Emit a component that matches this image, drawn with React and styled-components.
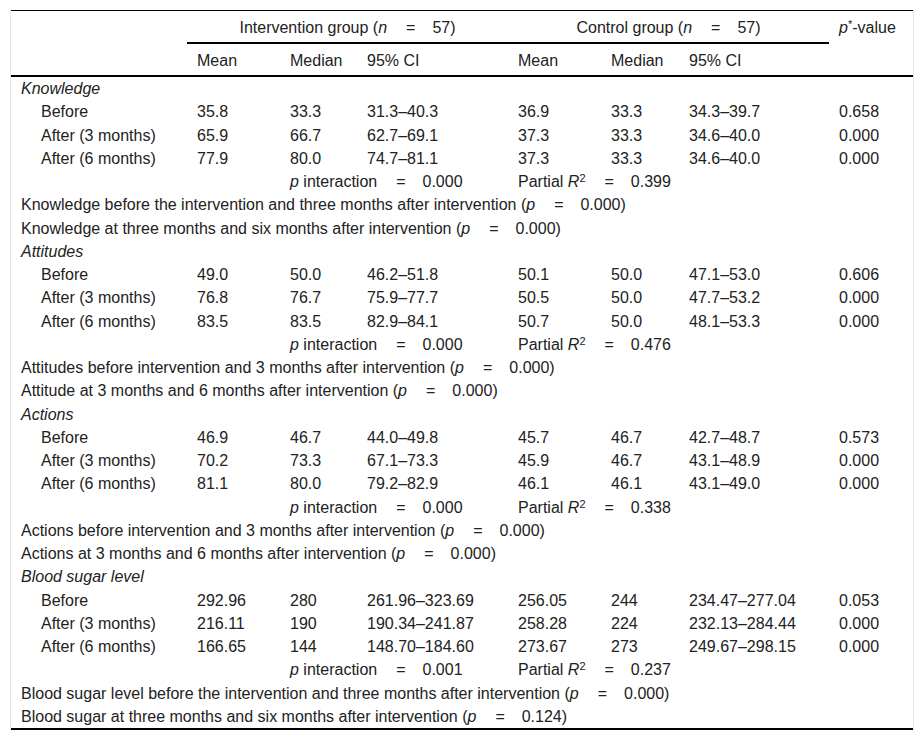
import React from 'react'
import styled, {createGlobalStyle} from 'styled-components'

const GlobalStyle = createGlobalStyle`
    body {
        margin: 0;
        background: #fff;
        font-family: "Liberation Sans", Arial, sans-serif;
        color: #222;
    }
`

const Frame = styled.div`
    margin: 10px 10px 0 10px;
    border-left: 1px solid #e4e4e4;
    border-right: 1px solid #e4e4e4;
    width: 902px;
`

const Table = styled.table`
    width: 100%;
    border-collapse: collapse;
    border-top: 1px solid #000;
    border-bottom: 2px solid #000;
    font-size: 16px;
    table-layout: fixed;
`

const HeadCell = styled.th`
    font-weight: normal;
    text-align: ${p => (p.$center ? 'center' : 'left')};
    vertical-align: top;
    padding: 8px 10px 6px 10px;
    line-height: 17px;
    border-bottom: ${p => (p.$rule ? '2px solid #000' : 'none')};
    white-space: nowrap;
`

const HeadRow = styled.tr`
    border-bottom: ${p => (p.$last ? '2px solid #000' : 'none')};
`

const Cell = styled.td`
    padding: 3px 10px 3px ${p => (p.$indent ? '30px' : '10px')};
    line-height: 17.25px;
    font-style: ${p => (p.$italic ? 'italic' : 'normal')};
    white-space: nowrap;
    vertical-align: top;
`

const Eq = styled.span`
    display: inline-block;
    margin: 0 17px 0 19px;
`

const Sup = styled.sup`
    font-size: 11px;
    line-height: 0;
    vertical-align: baseline;
    position: relative;
    top: -5px;
`

const sections = [
    {
        title: 'Knowledge',
        rows: [
            ['Before', '35.8', '33.3', '31.3–40.3', '36.9', '33.3', '34.3–39.7', '0.658'],
            ['After (3 months)', '65.9', '66.7', '62.7–69.1', '37.3', '33.3', '34.6–40.0', '0.000'],
            ['After (6 months)', '77.9', '80.0', '74.7–81.1', '37.3', '33.3', '34.6–40.0', '0.000'],
        ],
        pInt: '0.000',
        r2: '0.399',
        notes: [
            ['Knowledge before the intervention and three months after intervention', '0.000'],
            ['Knowledge at three months and six months after intervention', '0.000'],
        ],
    },
    {
        title: 'Attitudes',
        rows: [
            ['Before', '49.0', '50.0', '46.2–51.8', '50.1', '50.0', '47.1–53.0', '0.606'],
            ['After (3 months)', '76.8', '76.7', '75.9–77.7', '50.5', '50.0', '47.7–53.2', '0.000'],
            ['After (6 months)', '83.5', '83.5', '82.9–84.1', '50.7', '50.0', '48.1–53.3', '0.000'],
        ],
        pInt: '0.000',
        r2: '0.476',
        notes: [
            ['Attitudes before intervention and 3 months after intervention', '0.000'],
            ['Attitude at 3 months and 6 months after intervention', '0.000'],
        ],
    },
    {
        title: 'Actions',
        rows: [
            ['Before', '46.9', '46.7', '44.0–49.8', '45.7', '46.7', '42.7–48.7', '0.573'],
            ['After (3 months)', '70.2', '73.3', '67.1–73.3', '45.9', '46.7', '43.1–48.9', '0.000'],
            ['After (6 months)', '81.1', '80.0', '79.2–82.9', '46.1', '46.1', '43.1–49.0', '0.000'],
        ],
        pInt: '0.000',
        r2: '0.338',
        notes: [
            ['Actions before intervention and 3 months after intervention', '0.000'],
            ['Actions at 3 months and 6 months after intervention', '0.000'],
        ],
    },
    {
        title: 'Blood sugar level',
        rows: [
            ['Before', '292.96', '280', '261.96–323.69', '256.05', '244', '234.47–277.04', '0.053'],
            ['After (3 months)', '216.11', '190', '190.34–241.87', '258.28', '224', '232.13–284.44', '0.000'],
            ['After (6 months)', '166.65', '144', '148.70–184.60', '273.67', '273', '249.67–298.15', '0.000'],
        ],
        pInt: '0.001',
        r2: '0.237',
        notes: [
            ['Blood sugar level before the intervention and three months after intervention', '0.000'],
            ['Blood sugar at three months and six months after intervention', '0.124'],
        ],
    },
]

function Section({section}) {
    return (
        <>
            <tr>
                <Cell $italic colSpan={8}>{section.title}</Cell>
            </tr>
            {section.rows.map(r => (
                <tr key={r[0]}>
                    <Cell $indent>{r[0]}</Cell>
                    {r.slice(1).map((v, i) => <Cell key={i}>{v}</Cell>)}
                </tr>
            ))}
            <tr>
                <Cell />
                <Cell />
                <Cell colSpan={2}><i>p</i> interaction<Eq>=</Eq>{section.pInt}</Cell>
                <Cell colSpan={4}>Partial <i>R</i><Sup>2</Sup><Eq>=</Eq>{section.r2}</Cell>
            </tr>
            {section.notes.map(n => (
                <tr key={n[0]}>
                    <Cell colSpan={8}>{n[0]} (<i>p</i><Eq>=</Eq>{n[1]})</Cell>
                </tr>
            ))}
        </>
    )
}

export default function App() {
    return (
        <>
            <GlobalStyle />
            <Frame>
                <Table>
                    <colgroup>
                        <col style={{width: 176}} />
                        <col style={{width: 93}} />
                        <col style={{width: 77}} />
                        <col style={{width: 151}} />
                        <col style={{width: 93}} />
                        <col style={{width: 78}} />
                        <col style={{width: 150}} />
                        <col />
                    </colgroup>
                    <thead>
                        <tr>
                            <HeadCell />
                            <HeadCell $center $rule colSpan={3}>Intervention group (<i>n</i><Eq>=</Eq>57)</HeadCell>
                            <HeadCell $center $rule colSpan={3}>Control group (<i>n</i><Eq>=</Eq>57)</HeadCell>
                            <HeadCell><i>p</i><Sup>*</Sup>-value</HeadCell>
                        </tr>
                        <HeadRow $last>
                            <HeadCell />
                            <HeadCell>Mean</HeadCell>
                            <HeadCell>Median</HeadCell>
                            <HeadCell>95% CI</HeadCell>
                            <HeadCell>Mean</HeadCell>
                            <HeadCell>Median</HeadCell>
                            <HeadCell>95% CI</HeadCell>
                            <HeadCell />
                        </HeadRow>
                    </thead>
                    <tbody>
                        {sections.map(s => <Section key={s.title} section={s} />)}
                    </tbody>
                </Table>
            </Frame>
        </>
    )
}
